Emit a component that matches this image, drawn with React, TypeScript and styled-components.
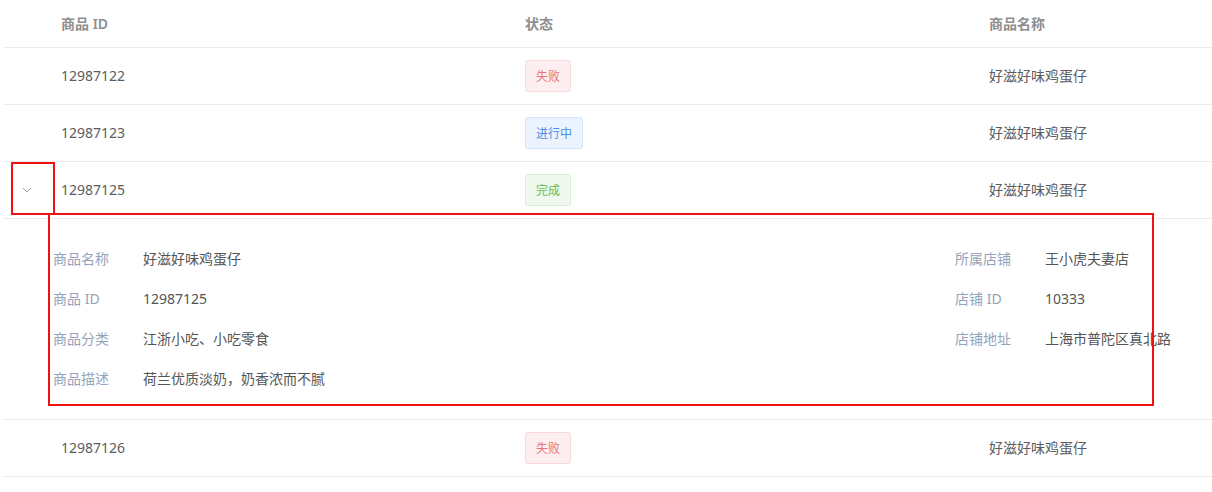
import React from "react";
import styled, { createGlobalStyle } from "styled-components";

const Global = createGlobalStyle`
  html, body { margin: 0; padding: 0; background: #fff; }
  body { font-family: "Noto Sans", "Noto Sans CJK SC", sans-serif; }
`;

const Page = styled.div`
  position: relative;
  width: 1212px;
  height: 492px;
  overflow: hidden;
  padding-left: 3px;
  box-sizing: border-box;
`;

const Table = styled.div`
  width: 1209px;
  display: flex;
  flex-direction: column;
`;

const Row = styled.div<{ $head?: boolean }>`
  display: grid;
  grid-template-columns: 48px 464px 464px 1fr;
  height: ${(p) => (p.$head ? 48 : 57)}px;
  padding-bottom: 2px;
  box-sizing: border-box;
  border-bottom: 1px solid #ebebeb;
  align-items: center;
  font-size: 14px;
  color: ${(p) => (p.$head ? "#8e8e8e" : "#5c5c5c")};
  font-weight: ${(p) => (p.$head ? 600 : 400)};
`;

const Cell = styled.div`
  padding-left: 10px;
  white-space: nowrap;
`;

const ExpandCell = styled.div`
  display: flex;
  justify-content: center;
  align-items: center;
  padding-top: 2px;
`;

const tagColors = {
  fail: { bg: "#fdeeef", border: "#fbdadd", fg: "#e9737d" },
  doing: { bg: "#ebf3fe", border: "#d2e3fc", fg: "#4a8ee6" },
  done: { bg: "#eef8ec", border: "#d9efd5", fg: "#67b85a" },
};

type TagKind = keyof typeof tagColors;

const Tag = styled.span<{ $kind: TagKind }>`
  display: inline-flex;
  align-items: center;
  justify-content: center;
  height: 32px;
  margin-top: 2px;
  padding: 0 10px 1px;
  box-sizing: border-box;
  border-radius: 3px;
  font-size: 12px;
  background: ${(p) => tagColors[p.$kind].bg};
  border: 1px solid ${(p) => tagColors[p.$kind].border};
  color: ${(p) => tagColors[p.$kind].fg};
`;

const Detail = styled.div`
  display: grid;
  grid-template-columns: 902px 1fr;
  padding: 19px 0 22px 50px;
  height: 201px;
  box-sizing: border-box;
  border-bottom: 1px solid #ebebeb;
`;

const DetailList = styled.div`
  display: flex;
  flex-direction: column;
`;

const DetailItem = styled.div`
  display: grid;
  grid-template-columns: 90px 1fr;
  height: 40px;
  align-items: center;
  font-size: 14px;
  white-space: nowrap;
`;

const Label = styled.span`
  color: #94a3ba;
`;

const Value = styled.span`
  color: #555;
`;

const Mark = styled.div<{ $x: number; $y: number; $w: number; $h: number }>`
  position: absolute;
  left: ${(p) => p.$x}px;
  top: ${(p) => p.$y}px;
  width: ${(p) => p.$w}px;
  height: ${(p) => p.$h}px;
  border: 2px solid #ee1111;
  box-sizing: border-box;
  pointer-events: none;
`;

const Chevron = () => (
  <svg width="10" height="6" viewBox="0 0 10 6" fill="none">
    <path d="M1 1 L5 5 L9 1" stroke="#a0a0a0" strokeWidth="1" />
  </svg>
);

const rows: { id: string; kind: TagKind; label: string; expanded?: boolean }[] = [
  { id: "12987122", kind: "fail", label: "失败" },
  { id: "12987123", kind: "doing", label: "进行中" },
  { id: "12987125", kind: "done", label: "完成", expanded: true },
  { id: "12987126", kind: "fail", label: "失败" },
];

const left = [
  ["商品名称", "好滋好味鸡蛋仔"],
  ["商品 ID", "12987125"],
  ["商品分类", "江浙小吃、小吃零食"],
  ["商品描述", "荷兰优质淡奶，奶香浓而不腻"],
];
const right = [
  ["所属店铺", "王小虎夫妻店"],
  ["店铺 ID", "10333"],
  ["店铺地址", "上海市普陀区真北路"],
];

export default function App() {
  return (
    <Page>
      <Global />
      <Table>
        <Row $head>
          <ExpandCell />
          <Cell>商品 ID</Cell>
          <Cell>状态</Cell>
          <Cell>商品名称</Cell>
        </Row>
        {rows.map((r) => (
          <React.Fragment key={r.id}>
            <Row>
              <ExpandCell>{r.expanded ? <Chevron /> : null}</ExpandCell>
              <Cell>{r.id}</Cell>
              <Cell>
                <Tag $kind={r.kind}>{r.label}</Tag>
              </Cell>
              <Cell>好滋好味鸡蛋仔</Cell>
            </Row>
            {r.expanded && (
              <Detail>
                <DetailList>
                  {left.map(([k, v]) => (
                    <DetailItem key={k}>
                      <Label>{k}</Label>
                      <Value>{v}</Value>
                    </DetailItem>
                  ))}
                </DetailList>
                <DetailList>
                  {right.map(([k, v]) => (
                    <DetailItem key={k}>
                      <Label>{k}</Label>
                      <Value>{v}</Value>
                    </DetailItem>
                  ))}
                </DetailList>
              </Detail>
            )}
          </React.Fragment>
        ))}
      </Table>
      <Mark $x={11} $y={162} $w={44} $h={53} />
      <Mark $x={48} $y={213} $w={1106} $h={193} />
    </Page>
  );
}
